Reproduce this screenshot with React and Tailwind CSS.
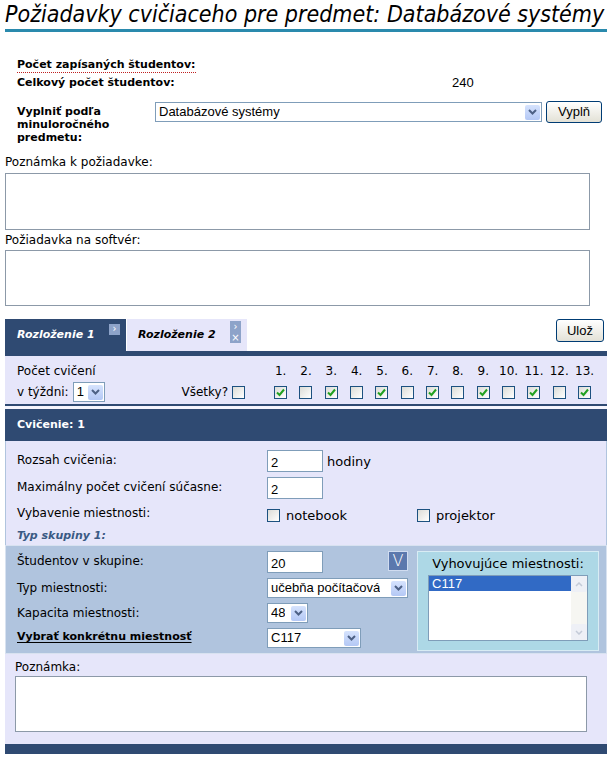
import React from "react";

const sans = "font-['DejaVu_Sans',sans-serif]";
const arial = "font-['Liberation_Sans',Arial,sans-serif]";

function Check({ checked }) {
  return (
    <span className="inline-flex h-[13px] w-[13px] items-center justify-center border border-[#1c5180] bg-gradient-to-br from-[#dcdcd7] to-white">
      {checked && (
        <svg width="9" height="9" viewBox="0 0 9 9">
          <path d="M1 4.5 L3.5 7 L8 1.5" stroke="#21a121" strokeWidth="2" fill="none" />
        </svg>
      )}
    </span>
  );
}

function Arrow() {
  return (
    <span className="flex h-[15px] w-[15px] items-center justify-center rounded-[2px] bg-gradient-to-b from-[#d6e3fd] to-[#b4c8f5]">
      <svg width="9" height="6" viewBox="0 0 9 6">
        <path d="M1 1 L4.5 4.5 L8 1" stroke="#4d6185" strokeWidth="2" fill="none" />
      </svg>
    </span>
  );
}

function Select({ value, width, className = "" }) {
  return (
    <div
      className={`flex h-[20px] items-center justify-between border border-[#7f9db9] bg-white pl-[3px] pr-[1px] text-[13px] text-black ${arial} ${className}`}
      style={{ width }}
    >
      <span className="truncate whitespace-nowrap">{value}</span>
      <Arrow />
    </div>
  );
}

function TextInput({ value }) {
  return (
    <div className={`flex h-[22px] w-[56px] items-end border border-[#7f9db9] bg-white px-[3px] pb-[2px] text-[13px] leading-none ${arial}`}>
      {value}
    </div>
  );
}

function XpButton({ children, className = "" }) {
  return (
    <button className={`rounded-[3px] border border-[#003c74] bg-gradient-to-b from-white to-[#e3e1d6] text-[13px] text-black ${arial} ${className}`}>
      {children}
    </button>
  );
}

function TabIcon({ glyph }) {
  return (
    <span className="flex h-[11px] w-[11px] items-center justify-center bg-[#8da3c9] text-[10px] leading-none text-white">
      {glyph}
    </span>
  );
}

export default function App() {
  const weeks = [1, 2, 3, 4, 5, 6, 7, 8, 9, 10, 11, 12, 13];

  return (
    <div className={`w-[612px] bg-white text-[12px] text-black ${sans}`}>
      {/* Title */}
      <h1 className="mx-[5px] mt-[2px] border-b-[3px] border-[#2a8aad] pb-[3px] font-['DejaVu_Sans_Condensed',sans-serif] text-[23px] italic leading-[24px] whitespace-nowrap">
        Požiadavky cvičiaceho pre predmet: Databázové systémy
      </h1>

      {/* Summary */}
      <div className="mt-[24px] pl-[17px] text-[11px] font-bold">
        <div className="flex h-[18px] items-center">
          <span className="border-b border-dotted border-[#c02020] leading-[14px]">Počet zapísaných študentov:</span>
        </div>
        <div className="flex h-[18px] items-center">
          <span className="w-[435px]">Celkový počet študentov:</span>
          <span className={`text-[13px] font-normal ${arial}`}>240</span>
        </div>
        <div className="mt-[13px] flex items-start">
          <span className="w-[138px] leading-[13px]">
            Vyplniť podľa
            <br />
            minuloročného
            <br />
            predmetu:
          </span>
          <Select value="Databázové systémy" width={387} className="mt-[-3px] font-normal" />
          <XpButton className="mt-[-4px] ml-[4px] h-[22px] w-[56px] font-normal">Vyplň</XpButton>
        </div>
      </div>

      {/* Notes */}
      <div className="px-[5px] pt-[10px]">
        <div className="leading-[16px]">Poznámka k požiadavke:</div>
        <textarea className="mt-[3px] block h-[57px] w-[585px] resize-none border border-[#8c99a8] bg-white" />
        <div className="mt-[2px] leading-[16px]">Požiadavka na softvér:</div>
        <textarea className="mt-[2px] block h-[56px] w-[585px] resize-none border border-[#8c99a8] bg-white" />
      </div>

      {/* Tabs */}
      <div className="mt-[13px] ml-[5px] flex w-[602px] items-start">
        <div className="flex h-[32px] w-[121px] items-center justify-between bg-[#2f4a72] pl-[12px] pr-[6px] text-white">
          <span className="text-[11px] font-bold italic">Rozloženie 1</span>
          <span className="mt-[-12px]"><TabIcon glyph="›" /></span>
        </div>
        <div className="ml-[1px] flex h-[32px] w-[120px] items-center justify-between bg-[#e6e6fa] pl-[11px] pr-[6px]">
          <span className="text-[11px] font-bold italic">Rozloženie 2</span>
          <span className="mt-[-6px] flex flex-col">
            <TabIcon glyph="›" />
            <TabIcon glyph="×" />
          </span>
        </div>
        <div className="flex-1" />
        <XpButton className="mr-[3px] h-[23px] w-[48px]">Ulož</XpButton>
      </div>

      {/* Layout panel */}
      <div className="ml-[5px] w-[602px] bg-[#e6e6fa]">
        <div className="border-t-[5px] border-b-[2px] border-[#2f4a72]">
          <div className="flex h-[48px] items-start pl-[12px] pt-[5px]">
            <div className="flex w-[150px] flex-col">
              <span className="leading-[20px]">Počet cvičení</span>
              <div className="mt-[1px] flex items-center">
                <span className="mr-[4px]">v týždni:</span>
                <Select value="1" width={32} />
              </div>
            </div>
            <div className="mt-[20px] flex h-[22px] w-[78px] items-center justify-end">
              <span className="mr-[4px]">Všetky?</span>
              <Check />
            </div>
            <div className="ml-[23px] grid grid-cols-[repeat(13,25.33px)] grid-rows-[20px_22px] items-center justify-items-center">
              {weeks.map((w) => (
                <span key={`n${w}`} className="leading-none">{w}.</span>
              ))}
              {weeks.map((w) => (
                <Check key={`c${w}`} checked={w % 2 === 1} />
              ))}
            </div>
          </div>
        </div>

        <div className="border-t-[3px] border-white/60">
          <div className="flex h-[32px] items-center bg-[#2f4a72] pl-[12px] text-[11px] font-bold text-white">
            Cvičenie: 1
          </div>
        </div>

        <div className="border-x border-[#b0c4de] pl-[11px] pt-[9px]">
          <div className="flex h-[27px] items-start">
            <span className="w-[250px] pt-[1px]">Rozsah cvičenia:</span>
            <TextInput value="2" />
            <span className="ml-[4px] pt-[2px] text-[13px]">hodiny</span>
          </div>
          <div className="flex h-[27px] items-start">
            <span className="w-[250px] pt-[1px]">Maximálny počet cvičení súčasne:</span>
            <TextInput value="2" />
          </div>
          <div className="flex h-[23px] items-start">
            <span className="w-[250px]">Vybavenie miestnosti:</span>
            <span className="flex w-[150px] items-center gap-[6px] pt-[2px] text-[13px]">
              <Check />
              notebook
            </span>
            <span className="flex items-center gap-[6px] pt-[2px] text-[13px]">
              <Check />
              projektor
            </span>
          </div>
          <div className="h-[18px] pt-[1px] text-[11px] font-bold italic text-[#3a5a84]">Typ skupiny 1:</div>
        </div>

        {/* Group box */}
        <div className="flex border border-[#d8e2f0] bg-[#b0c4de] pl-[11px] pt-[5px] pb-[1px]">
          <div className="w-[400px]">
            <div className="flex h-[27px] items-start">
              <span className="w-[250px] pt-[1px]">Študentov v skupine:</span>
              <TextInput value="20" />
              <span className="ml-[65px] flex h-[20px] w-[20px] items-center justify-center border border-[#d0dcf0] bg-[#5b78ad] text-[16px] font-light text-white">
                V
              </span>
            </div>
            <div className="flex h-[25px] items-start">
              <span className="w-[250px] pt-[1px]">Typ miestnosti:</span>
              <Select value="učebňa počítačová" width={141} />
            </div>
            <div className="flex h-[25px] items-start">
              <span className="w-[250px] pt-[1px]">Kapacita miestnosti:</span>
              <Select value="48" width={41} />
            </div>
            <div className="flex h-[24px] items-start">
              <span className="w-[250px] pt-[1px] text-[11px] font-bold underline underline-offset-2">Vybrať konkrétnu miestnosť</span>
              <Select value="C117" width={94} />
            </div>
          </div>
          <div className="mb-[1px] flex h-[100px] w-[182px] flex-col items-center border border-[#d8ecf4] bg-[#add8e6]">
            <span className="mt-[3px] text-[13px] leading-[18px]">Vyhovujúce miestnosti:</span>
            <div className="mt-[2px] flex h-[66px] w-[160px] border border-[#7f9db9] bg-white">
              <div className="flex-1">
                <div className={`bg-[#316ac5] px-[3px] text-[13px] leading-[15px] text-white ${arial}`}>C117</div>
              </div>
              <div className="flex w-[16px] flex-col justify-between bg-[#f6f6f2]">
                <span className="flex h-[16px] items-center justify-center rounded-[2px] bg-[#eef0f6]">
                  <svg width="8" height="5" viewBox="0 0 8 5"><path d="M1 4 L4 1 L7 4" stroke="#c4cbd8" strokeWidth="1.5" fill="none" /></svg>
                </span>
                <span className="flex h-[16px] items-center justify-center rounded-[2px] bg-[#eef0f6]">
                  <svg width="8" height="5" viewBox="0 0 8 5"><path d="M1 1 L4 4 L7 1" stroke="#c4cbd8" strokeWidth="1.5" fill="none" /></svg>
                </span>
              </div>
            </div>
          </div>
        </div>

        {/* Note */}
        <div className="px-[10px] pt-[5px] pb-[12px]">
          <div className="leading-[16px]">Poznámka:</div>
          <textarea className="mt-[1px] block h-[56px] w-[572px] resize-none border border-[#8c99a8] bg-white" />
        </div>
        <div className="h-[10px] bg-[#2f4a72]" />
      </div>
    </div>
  );
}
